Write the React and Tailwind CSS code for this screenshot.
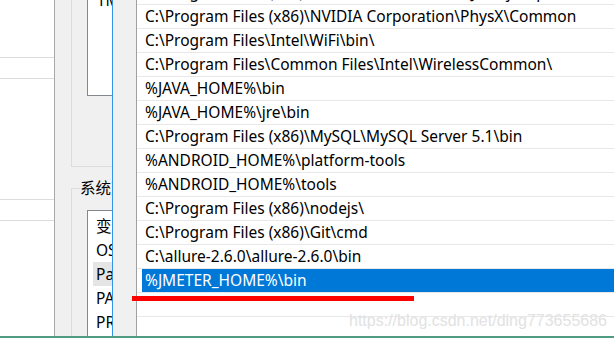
export default function App() {
  const rows = [
    "C:\\Program Files (x86)\\Common Files\\Oracle\\Java\\javapath",
    "C:\\Program Files (x86)\\NVIDIA Corporation\\PhysX\\Common",
    "C:\\Program Files\\Intel\\WiFi\\bin\\",
    "C:\\Program Files\\Common Files\\Intel\\WirelessCommon\\",
    "%JAVA_HOME%\\bin",
    "%JAVA_HOME%\\jre\\bin",
    "C:\\Program Files (x86)\\MySQL\\MySQL Server 5.1\\bin",
    "%ANDROID_HOME%\\platform-tools",
    "%ANDROID_HOME%\\tools",
    "C:\\Program Files (x86)\\nodejs\\",
    "C:\\Program Files (x86)\\Git\\cmd",
    "C:\\allure-2.6.0\\allure-2.6.0\\bin",
  ];
  const vars = ["OS", "Path", "PATHEXT", "PROCESSOR_ARCHITECTURE"];

  return (
    <div
      className="relative w-[614px] h-[340px] overflow-hidden bg-white flex flex-col text-black"
      style={{ fontFamily: '"Noto Sans", "Noto Sans CJK SC", sans-serif' }}
    >
      <div className="flex h-[336px] overflow-hidden">
        {/* left background window */}
        <div className="w-[55px] shrink-0 bg-white border-r border-[#a9a9a9]">
          <div className="mt-[57px] h-[22px] border-y border-[#dcdcdc]" />
          <div className="mt-[120px] h-[22px] border-y border-[#dcdcdc]" />
        </div>

        {/* environment variables dialog */}
        <div className="w-[57px] shrink-0 bg-[#f0f0f0] pl-[16px] flex flex-col overflow-hidden">
          <div className="h-[167px] w-[60px] border-l border-b border-[#dcdcdc] pl-[15px] shrink-0">
            <div className="h-[96px] w-[40px] bg-white border-l border-b border-[#828790] overflow-hidden">
              <div className="-mt-[12px] pl-[9px] h-[24px] leading-[24px] text-[15.5px] whitespace-nowrap">TMP</div>
            </div>
          </div>
          <div className="mt-[21px] flex-1 w-[60px] border-l border-t border-[#dcdcdc] flex flex-col">
            <div className="-mt-[11px] ml-[8px] h-[21px] leading-[21px] text-[15.5px] whitespace-nowrap bg-[#f0f0f0] w-fit pr-[1px]">
              系统变量
            </div>
            <div className="mt-[11px] ml-[15px] flex-1 w-[50px] bg-white border-l border-t border-[#828790] pt-[3px] overflow-hidden">
              <div className="h-[24px] leading-[24px] pl-[8px] text-[15.5px] whitespace-nowrap">变量</div>
              {vars.map((v) => (
                <div key={v} className="h-[24px] pl-[5px]">
                  <div
                    className={
                      "h-full pl-[3px] leading-[24px] text-[15.5px] whitespace-nowrap " +
                      (v === "Path" ? "bg-[#e5e5e5]" : "")
                    }
                  >
                    {v}
                  </div>
                </div>
              ))}
            </div>
          </div>
        </div>

        {/* edit environment variable dialog */}
        <div className="flex-1 flex border-l border-[#2f95ec] bg-[#f0f0f0] pl-[23px] overflow-hidden">
          <div className="flex-1 bg-white border-l border-[#a0a0a0] overflow-hidden">
            <div className="-mt-[19px]">
              {rows.map((r) => (
                <div
                  key={r}
                  className="h-[24px] border-b border-[#e8e8e8] pl-[8px] leading-[23px] text-[15.5px] whitespace-nowrap"
                >
                  {r}
                </div>
              ))}
              <div className="h-[24px] border-b border-[#e8e8e8] pl-[5px]">
                <div className="h-[23px] bg-[#0078d7] text-white pl-[3px] leading-[23px] text-[15.5px] whitespace-nowrap">
                  %JMETER_HOME%\bin
                </div>
              </div>
              <div className="h-[24px] border-b border-[#e8e8e8]" />
              <div className="h-[24px] border-b border-[#e8e8e8]" />
            </div>
          </div>
        </div>
      </div>
      <div className="h-[2px] bg-[#4f9c80]" />
      <div className="flex-1 bg-white" />

      {/* red annotation underline */}
      <div className="absolute left-[132px] top-[296px] w-[282px] h-[5px] bg-[#ff0000]" />

      {/* watermark */}
      <div
        className="absolute left-[349px] top-[311px] text-[16px] leading-[20px] text-[#e2e2e2] whitespace-nowrap"
        style={{ fontFamily: '"Liberation Sans", Arial, sans-serif' }}
      >
        https://blog.csdn.net/ding773655686
      </div>
    </div>
  );
}
